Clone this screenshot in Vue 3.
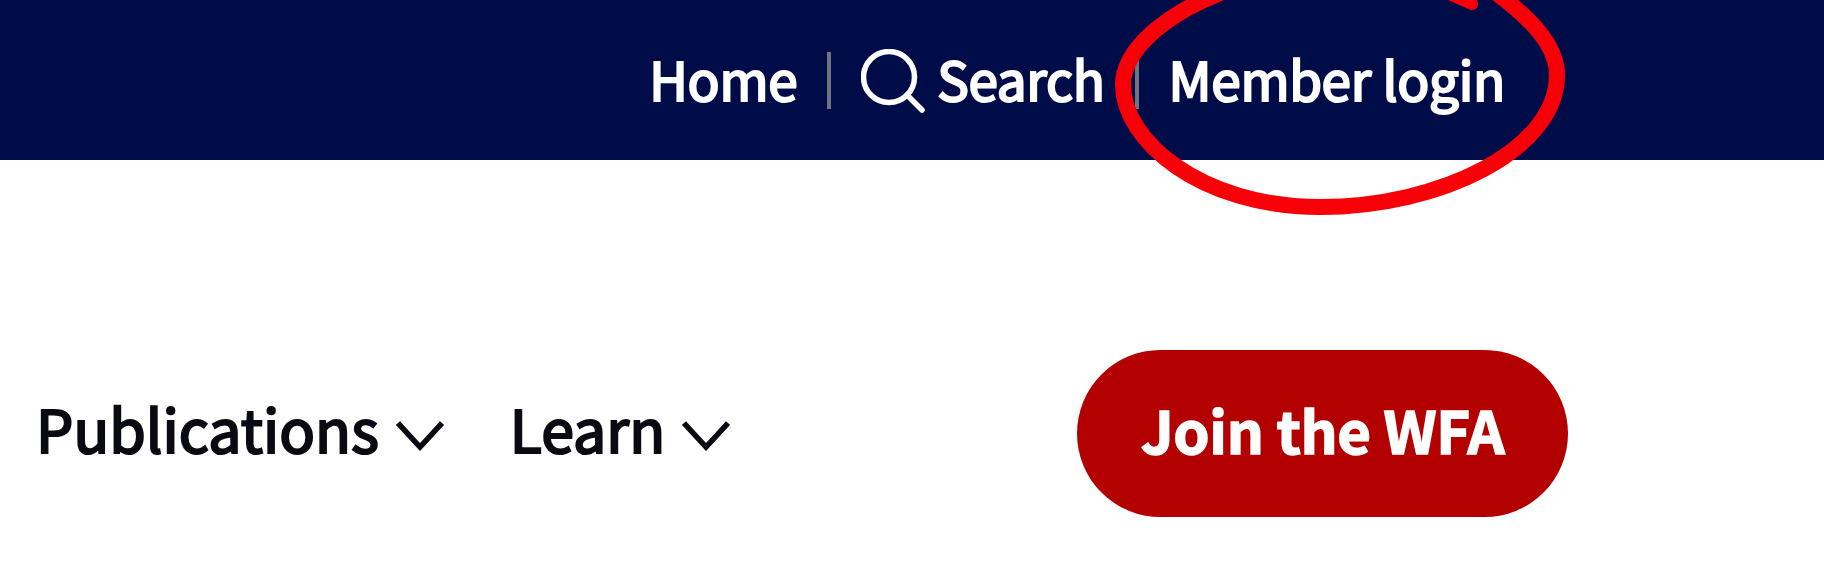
<template>
	<div class="page">
		<header class="top-bar">
			<nav class="top-nav">
				<a class="top-link">Home</a>
				<span class="divider"></span>
				<a class="top-link search-link">
					<svg class="search-icon" viewBox="0 0 64 64" fill="none" stroke="#fff" stroke-width="5.5" stroke-linecap="round">
						<circle cx="28" cy="28" r="25.5" />
						<path d="M46 46 L61 61" />
					</svg>
					Search
				</a>
				<span class="divider"></span>
				<a class="top-link">Member login</a>
			</nav>
		</header>

		<div class="main-bar">
			<nav class="main-nav">
				<a v-for="item in menuItems" :key="item" class="main-link">
					{{ item }}
					<svg class="chevron" viewBox="0 0 48 30" fill="none" stroke="#0a0a12" stroke-width="5.5">
						<path d="M2 2 L24 26 L46 2" />
					</svg>
				</a>
			</nav>
			<a class="join-btn">Join the WFA</a>
		</div>

		<!-- hand drawn circle over the login link -->
		<svg class="scribble" viewBox="0 0 1824 576" fill="none" stroke="#f70007" stroke-width="16" stroke-linecap="round">
			<path d="M1218 -6 C1165 15 1123 50 1123 85 C1123 140 1200 207 1320 207 C1440 207 1557 150 1557 75 C1557 45 1530 18 1495 -8" />
			<path stroke-width="12" d="M1440 -10 L1472 4" />
		</svg>
	</div>
</template>

<script setup>
const menuItems = ["Publications", "Learn"];
</script>

<style>
html,
body {
	margin: 0;
	background: #fff;
}
</style>

<style scoped>
.page {
	position: relative;
	width: 1824px;
	height: 576px;
	overflow: hidden;
	font-family: "Noto Sans CJK JP", "Noto Sans", sans-serif;
}
.top-bar {
	height: 160px;
	background: #000c47;
	display: flex;
	justify-content: flex-end;
	align-items: center;
	padding: 0 319px 4px 0;
	box-sizing: border-box;
}
.top-nav {
	display: flex;
	align-items: center;
}
.top-link {
	color: #fff;
	font-size: 53px;
	font-weight: 400;
	-webkit-text-stroke: 2.2px #fff;
	letter-spacing: -0.3px;
	line-height: 60px;
	display: flex;
	align-items: center;
}
.divider {
	width: 4px;
	height: 57px;
	background: #6f7280;
	margin: 4px 30px 0 30px;
}
.search-link {
	gap: 12px;
}
.search-icon {
	width: 64px;
	height: 64px;
	margin-top: 6px;
}
.main-bar {
	display: flex;
	justify-content: space-between;
	align-items: center;
	padding: 190px 256px 0 36px;
}
.main-nav {
	display: flex;
	gap: 66px;
	padding-bottom: 12px;
}
.main-link {
	display: flex;
	align-items: center;
	gap: 17px;
	color: #0a0a12;
	font-size: 59px;
	font-weight: 400;
	-webkit-text-stroke: 2.2px #0a0a12;
	letter-spacing: 0.05px;
	line-height: 66px;
}
.chevron {
	width: 48px;
	height: 30px;
	margin-top: 16px;
}
.join-btn {
	width: 491px;
	height: 167px;
	padding-bottom: 10px;
	box-sizing: border-box;
	border-radius: 84px;
	background: #b30000;
	color: #fff;
	font-size: 58px;
	font-weight: 700;
	-webkit-text-stroke: 1.5px #fff;
	letter-spacing: -0.3px;
	display: flex;
	align-items: center;
	justify-content: center;
}
.scribble {
	position: absolute;
	inset: 0;
	width: 1824px;
	height: 576px;
	pointer-events: none;
}
</style>
